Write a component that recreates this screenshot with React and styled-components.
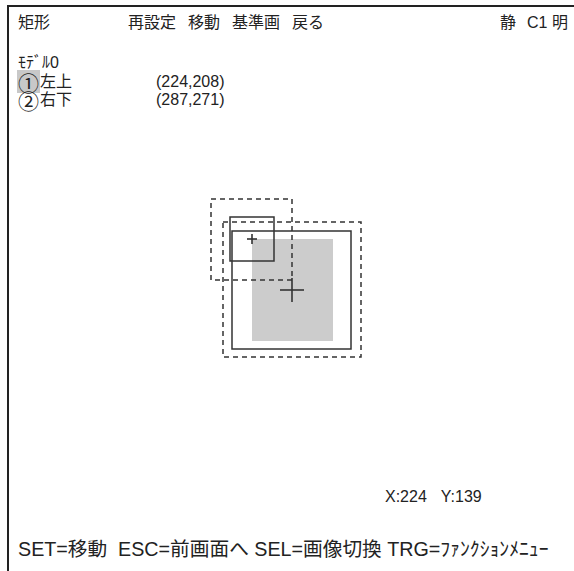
import React from "react";
import styled, { createGlobalStyle } from "styled-components";

const GlobalStyle = createGlobalStyle`
  html, body {
    margin: 0;
    padding: 0;
    background: #ffffff;
    overflow: hidden;
  }
  body {
    font-family: "Liberation Sans", "Noto Sans CJK JP", sans-serif;
    color: #222222;
  }
`;

const Frame = styled.div`
  margin: 5px 0 0 7px;
  width: 567px;
  height: 566px;
  border-top: 2px solid #222222;
  border-left: 2px solid #222222;
  box-sizing: border-box;
  padding-top: 7px;
  display: flex;
  flex-direction: column;
  font-size: 16px;
  line-height: 18px;
`;

const Header = styled.div`
  display: grid;
  grid-template-columns: 110px 372px 27px auto;
  padding-left: 9px;
  height: 18px;
`;

const Menu = styled.div`
  display: flex;
  gap: 12px;
`;

const Label = styled.div`
  margin-top: 22px;
  padding-left: 9px;
`;

const Point = styled.div`
  display: grid;
  grid-template-columns: 139px auto;
  padding-left: 8px;
  height: 18px;
  align-items: center;
  margin-top: ${(p) => p.$gap || 0}px;
`;

const Name = styled.span`
  display: flex;
  align-items: center;
`;

const Mark = styled.span`
  position: relative;
  z-index: 0;
  display: inline-flex;
  align-items: center;
  width: 23px;
  height: 18px;
  line-height: 18px;
  padding-left: 1px;
  box-sizing: border-box;
  font-family: "Noto Sans CJK JP", sans-serif;
  font-size: 21px;
  &::before {
    content: "";
    position: absolute;
    z-index: -1;
    left: 0;
    right: 0;
    top: -3px;
    bottom: -2px;
    background: ${(p) => (p.$active ? "#c8c8c8" : "transparent")};
  }
`;

const Drawing = styled.svg`
  display: block;
  flex: none;
`;

const Coords = styled.div`
  display: flex;
  gap: 14px;
  padding-left: 376px;
  height: 18px;
`;

const Footer = styled.div`
  margin-top: 32px;
  padding-left: 9px;
  font-size: 19.7px;
  line-height: 22px;
  white-space: pre;
`;

const Cross = ({ x, y, r }) => (
  <g stroke="#333333" strokeWidth="1.6">
    <line x1={x - r} y1={y} x2={x + r} y2={y} />
    <line x1={x} y1={y - r} x2={x} y2={y + r} />
  </g>
);

export default function App() {
  return (
    <>
      <GlobalStyle />
      <Frame>
        <Header>
          <span>矩形</span>
          <Menu>
            <span>再設定</span>
            <span>移動</span>
            <span>基準画</span>
            <span>戻る</span>
          </Menu>
          <span>静</span>
          <span>C1 明</span>
        </Header>
        <Label>ﾓﾃﾞﾙ0</Label>
        <Point $gap={1}>
          <Name>
            <Mark $active>①</Mark>左上
          </Name>
          <span>(224,208)</span>
        </Point>
        <Point>
          <Name>
            <Mark>②</Mark>右下
          </Name>
          <span>(287,271)</span>
        </Point>
        <Drawing width="500" height="379" viewBox="9 109 500 379">
          <rect x="252" y="239" width="81" height="102" fill="#cccccc" />
          <g fill="none" stroke="#333333" strokeWidth="1.5">
            <rect x="232" y="231" width="119" height="118" />
            <rect x="230" y="217" width="44" height="44" />
          </g>
          <g fill="none" stroke="#333333" strokeWidth="1.5" strokeDasharray="5 4">
            <rect x="211" y="199" width="81" height="81" />
            <rect x="223" y="222" width="138" height="135" />
          </g>
          <Cross x={252} y={239} r={5} />
          <Cross x={292} y={290} r={12} />
        </Drawing>
        <Coords>
          <span>X:224</span>
          <span>Y:139</span>
        </Coords>
        <Footer>SET=移動  ESC=前画面へ SEL=画像切換 TRG=ﾌｧﾝｸｼｮﾝﾒﾆｭｰ</Footer>
      </Frame>
    </>
  );
}
